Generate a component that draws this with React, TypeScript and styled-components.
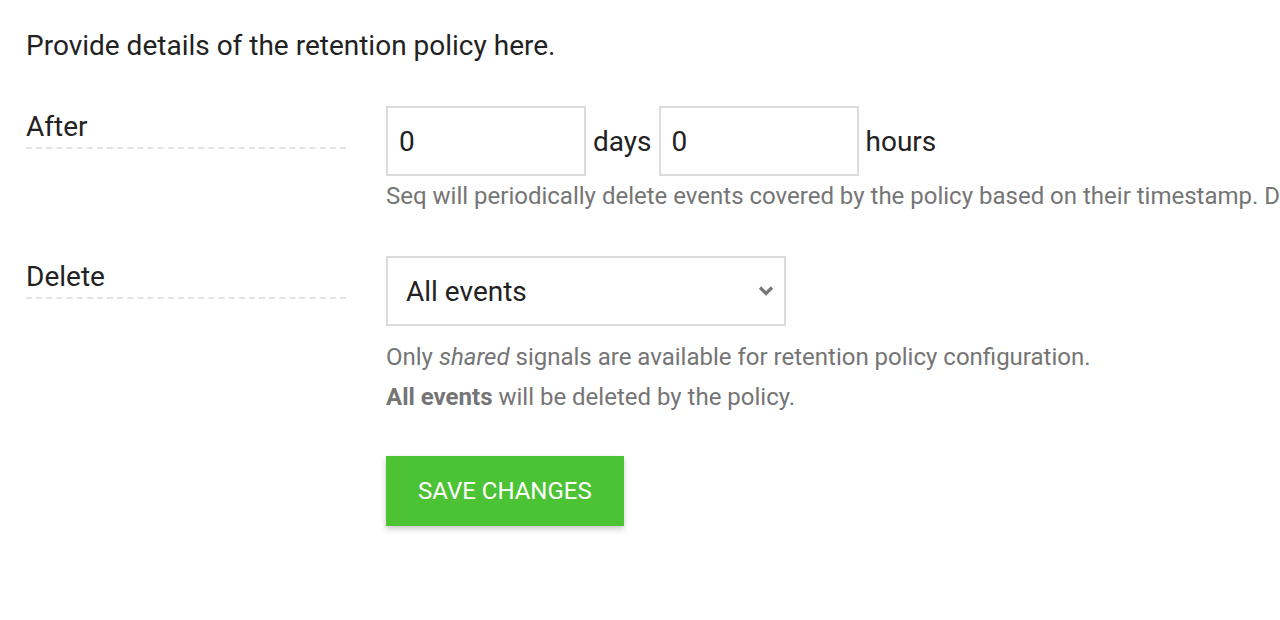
import React from "react";
import styled, { createGlobalStyle } from "styled-components";

const GlobalStyle = createGlobalStyle`
  body {
    margin: 0;
    background: #fff;
    font-family: Roboto, "Liberation Sans", sans-serif;
    color: #222;
    overflow: hidden;
  }
`;

const Page = styled.div`
  padding: 28px 26px;
  width: 1600px;
`;

const Intro = styled.p`
  margin: 0 0 42px;
  font-size: 28px;
  line-height: 36px;
`;

const Row = styled.div`
  display: grid;
  grid-template-columns: 320px auto;
  column-gap: 40px;
  margin-bottom: 40px;
`;

const Label = styled.div`
  align-self: start;
  margin-top: 5px;
  padding-bottom: 4px;
  font-size: 28px;
  line-height: 32px;
  border-bottom: 2px dashed #e2e2e2;
`;

const Field = styled.div`
  display: flex;
  flex-direction: column;
`;

const Inline = styled.div`
  display: flex;
  align-items: center;
  gap: 7px;
  font-size: 28px;
`;

const Input = styled.input`
  box-sizing: border-box;
  width: 200px;
  height: 70px;
  padding: 0 11px;
  border: 2px solid #dcdcdc;
  font: inherit;
  font-size: 28px;
  color: #222;
  outline: none;
`;

const SelectBox = styled.div`
  position: relative;
  width: 400px;
  margin-bottom: 11px;
`;

const Select = styled.select`
  box-sizing: border-box;
  width: 100%;
  height: 70px;
  padding: 0 18px;
  border: 2px solid #dcdcdc;
  background: #fff;
  font-family: Roboto, "Liberation Sans", sans-serif;
  font-size: 28px;
  color: #222;
  appearance: none;
  outline: none;
`;

const Chevron = styled.svg`
  position: absolute;
  right: 10px;
  top: 28px;
  pointer-events: none;
`;

const Help = styled.p`
  margin: 0;
  font-size: 24px;
  line-height: 40px;
  color: #757575;
  white-space: nowrap;
`;

const Button = styled.button`
  margin-top: 39px;
  align-self: start;
  height: 70px;
  padding: 0 32px;
  border: none;
  background: #4cc334;
  color: #fff;
  font-family: Roboto, "Liberation Sans", sans-serif;
  font-size: 24px;
  text-transform: uppercase;
  box-shadow: 0 3px 6px rgba(0, 0, 0, 0.22);
  cursor: pointer;
`;

export default function App() {
  return (
    <Page>
      <GlobalStyle />
      <Intro>Provide details of the retention policy here.</Intro>
      <Row>
        <Label>After</Label>
        <Field>
          <Inline>
            <Input defaultValue="0" />
            <span>days</span>
            <Input defaultValue="0" />
            <span>hours</span>
          </Inline>
          <Help>
            Seq will periodically delete events covered by the policy based on their timestamp. Deletion is not
            immediate and may take some time to complete.
          </Help>
        </Field>
      </Row>
      <Row>
        <Label>Delete</Label>
        <Field>
          <SelectBox>
            <Select defaultValue="all">
              <option value="all">All events</option>
            </Select>
            <Chevron width="20" height="14" viewBox="0 0 20 14">
              <path d="M4 3.5l6 6 6-6" fill="none" stroke="#777" strokeWidth="3.2" />
            </Chevron>
          </SelectBox>
          <Help>
            Only <em>shared</em> signals are available for retention policy configuration.
          </Help>
          <Help>
            <b>All events</b> will be deleted by the policy.
          </Help>
          <Button>Save changes</Button>
        </Field>
      </Row>
    </Page>
  );
}
